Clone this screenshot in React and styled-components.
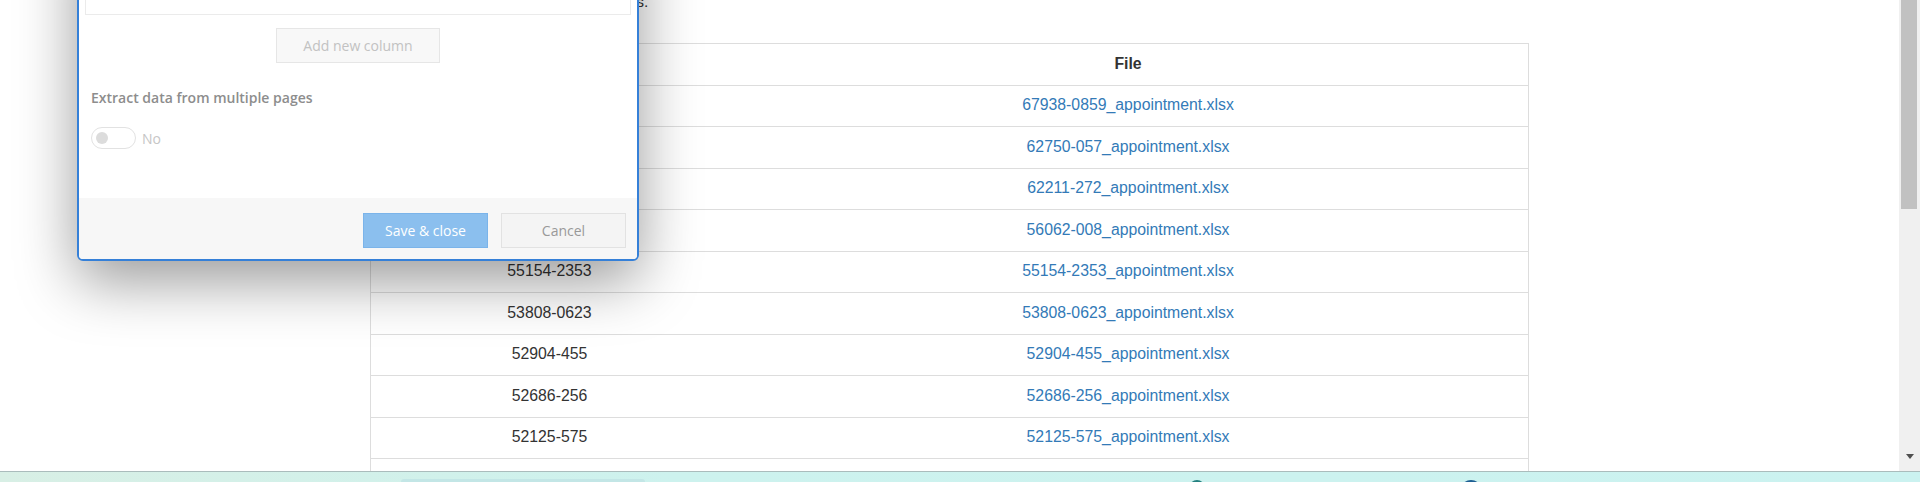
import React from "react";
import styled, { createGlobalStyle } from "styled-components";

const GlobalStyle = createGlobalStyle`
  html, body {
    margin: 0;
    padding: 0;
    overflow: hidden;
    background: #fff;
  }
`;

const Screen = styled.div`
  width: 1920px;
  height: 482px;
  display: flex;
  flex-direction: column;
  overflow: hidden;
`;

const Browser = styled.div`
  display: flex;
  height: 471px;
`;

const Viewport = styled.div`
  position: relative;
  flex: 1;
  overflow: hidden;
  background: #fff;
`;

const Page = styled.div`
  width: 1159px;
  margin: -9px auto 0;
  font-family: "Liberation Sans", Arial, sans-serif;
  font-size: 15.8px;
  color: #333;
`;

const Intro = styled.p`
  margin: 0 0 30px;
  font-size: 15.5px;
  line-height: 22px;
`;

const Table = styled.div`
  border-left: 1px solid #ddd;
  border-right: 1px solid #ddd;
`;

const Row = styled.div`
  display: grid;
  grid-template-columns: 357px 1fr;
  height: 41.5px;
  box-sizing: border-box;
  border-top: 1px solid #ddd;
  padding-bottom: 1px;
`;

const Cell = styled.div`
  display: flex;
  align-items: center;
  justify-content: center;
  font-weight: ${(p) => (p.$head ? 700 : 400)};
  color: ${(p) => (p.$link ? "#337ab7" : "#333")};
`;

const Modal = styled.div`
  position: absolute;
  left: 77px;
  top: 261px;
  transform: translateY(-100%);
  width: 562px;
  box-sizing: border-box;
  border: 2px solid #3580d8;
  border-radius: 0 0 6px 6px;
  background: #fff;
  box-shadow: 0 20px 60px rgba(0, 0, 0, 0.4);
  font-family: "Open Sans", sans-serif;
  font-size: 14px;
  z-index: 5;
`;

const ModalBody = styled.div`
  display: flex;
  flex-direction: column;
  padding: 20px 12px 49px;
`;

const ModalTitle = styled.div`
  font-size: 18px;
  font-weight: 600;
  color: #555;
  margin-bottom: 16px;
`;

const ColumnInput = styled.div`
  height: 36px;
  margin: 0 -6px;
  border: 1px solid #ebebeb;
  box-sizing: border-box;
  background: #fff;
`;

const AddButton = styled.div`
  align-self: center;
  margin-top: 13px;
  height: 35px;
  padding: 0 26px;
  box-sizing: border-box;
  display: flex;
  align-items: center;
  border: 1px solid #e6e6e6;
  background: #f8f8f8;
  color: #c2c2c2;
`;

const FieldLabel = styled.div`
  margin-top: 25px;
  line-height: 20px;
  font-weight: 600;
  color: #8d8d8d;
`;

const ToggleRow = styled.div`
  display: flex;
  align-items: center;
  gap: 6px;
  margin-top: 19px;
`;

const Toggle = styled.div`
  width: 45px;
  height: 22px;
  box-sizing: border-box;
  border: 1px solid #e2e2e2;
  border-radius: 11px;
  display: flex;
  align-items: center;
  padding-left: 4px;
`;

const Knob = styled.div`
  width: 12px;
  height: 12px;
  border-radius: 50%;
  background: #dcdcdc;
`;

const ToggleText = styled.span`
  color: #c6c6c6;
`;

const Footer = styled.div`
  display: flex;
  justify-content: flex-end;
  gap: 13px;
  padding: 15px 11px 11px;
  background: #f7f7f7;
  border-radius: 0 0 4px 4px;
`;

const FooterButton = styled.div`
  width: 125px;
  height: 35px;
  box-sizing: border-box;
  display: flex;
  align-items: center;
  justify-content: center;
  border: 1px solid ${(p) => (p.$primary ? "#7bb4ea" : "#e2e2e2")};
  background: ${(p) => (p.$primary ? "#8bbfee" : "#f4f4f4")};
  color: ${(p) => (p.$primary ? "#fff" : "#999")};
`;

const Scrollbar = styled.div`
  width: 21px;
  background: #f0f0f0;
  display: flex;
  flex-direction: column;
`;

const Thumb = styled.div`
  height: 209px;
  margin: 0 3px 0 2px;
  background: #c1c1c1;
`;

const Track = styled.div`
  flex: 1;
`;

const ArrowButton = styled.div`
  height: 21px;
  display: flex;
  justify-content: center;
  align-items: flex-start;
  padding-top: 4px;
  box-sizing: border-box;
`;

const ArrowDown = styled.div`
  width: 0;
  height: 0;
  border-left: 4.5px solid transparent;
  border-right: 4.5px solid transparent;
  border-top: 5px solid #505050;
`;

const Taskbar = styled.div`
  flex: 1;
  display: flex;
  align-items: flex-start;
  padding-left: 401px;
  border-top: 1px solid #aabcbc;
  background: linear-gradient(90deg, #d8efe5 0%, #cdf2ee 35%, #cbf2f0 100%);
  overflow: hidden;
`;

const TaskPanel = styled.div`
  width: 244px;
  height: 6px;
  margin-top: 7px;
  border-radius: 3px 3px 0 0;
  background: #c3e6e6;
`;

const TaskIcon = styled.div`
  width: ${(p) => p.$size}px;
  height: ${(p) => p.$size}px;
  margin-top: 8px;
  margin-left: ${(p) => p.$offset}px;
  border-radius: 50%;
  flex-shrink: 0;
  background: ${(p) => p.$color};
`;

const rows = [
  "67938-0859",
  "62750-057",
  "62211-272",
  "56062-008",
  "55154-2353",
  "53808-0623",
  "52904-455",
  "52686-256",
  "52125-575",
  "51672-4061",
  "50090-3210",
];

export default function App() {
  return (
    <>
      <GlobalStyle />
      <Screen>
        <Browser>
          <Viewport>
            <Page>
              <Intro>Below, you can find your generated files.</Intro>
              <Table>
                <Row>
                  <Cell $head>NDC</Cell>
                  <Cell $head>File</Cell>
                </Row>
                {rows.map((code) => (
                  <Row key={code}>
                    <Cell>{code}</Cell>
                    <Cell $link>{code}_appointment.xlsx</Cell>
                  </Row>
                ))}
              </Table>
            </Page>
            <Modal>
              <ModalBody>
                <ModalTitle>Table columns</ModalTitle>
                <ColumnInput />
                <AddButton>Add new column</AddButton>
                <FieldLabel>Extract data from multiple pages</FieldLabel>
                <ToggleRow>
                  <Toggle>
                    <Knob />
                  </Toggle>
                  <ToggleText>No</ToggleText>
                </ToggleRow>
              </ModalBody>
              <Footer>
                <FooterButton $primary>Save &amp; close</FooterButton>
                <FooterButton>Cancel</FooterButton>
              </Footer>
            </Modal>
          </Viewport>
          <Scrollbar>
            <Thumb />
            <Track />
            <ArrowButton>
              <ArrowDown />
            </ArrowButton>
          </Scrollbar>
        </Browser>
        <Taskbar>
          <TaskPanel />
          <TaskIcon $size={16} $offset={544} $color="#23807f" />
          <TaskIcon $size={22} $offset={255} $color="#1d5e92" />
        </Taskbar>
      </Screen>
    </>
  );
}
